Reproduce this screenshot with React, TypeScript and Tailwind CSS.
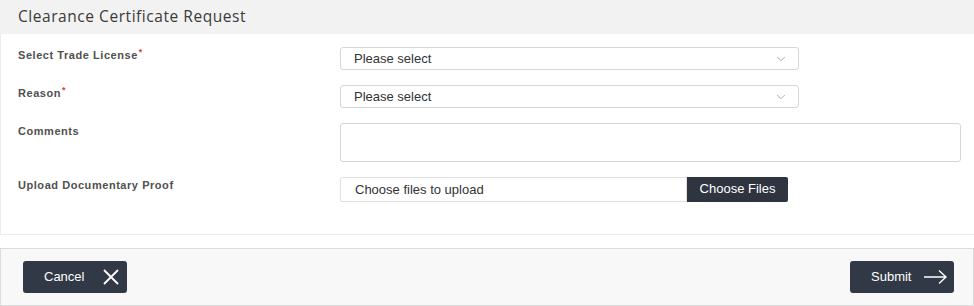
import { ChevronDown } from "lucide-react";

const arial = "font-['Liberation_Sans',Arial,sans-serif]";

function Label({ text, required }: { text: string; required?: boolean }) {
  return (
    <div className={`${arial} text-[11px] font-bold tracking-[0.55px] text-[#505050]`}>
      {text}
      {required && <sup className="ml-[1px] text-[9px] text-[#e53935]">*</sup>}
    </div>
  );
}

function Select() {
  return (
    <div className="flex h-[23px] w-[459px] items-center justify-between rounded-[3px] border border-[#d6d6d6] bg-white pl-[13px] pr-[10px]">
      <span className={`${arial} text-[13px] text-[#333]`}>Please select</span>
      <ChevronDown className="h-[14px] w-[14px] text-[#888]" strokeWidth={1.2} />
    </div>
  );
}

export default function App() {
  return (
    <div className="h-[306px] w-[974px] bg-white">
      {/* title bar */}
      <div className="flex h-[34px] items-center bg-[#f2f2f2] pl-[18px]">
        <h1 className="font-['Open_Sans',Lato,sans-serif] text-[15.5px] font-normal tracking-[0.55px] text-[#3a3a3a]">
          Clearance Certificate Request
        </h1>
      </div>

      {/* form */}
      <div className="h-[201px] border-b border-l border-[#ececec] pl-[17px]">
        <div className="flex h-[38px] pt-[13px]">
          <div className="w-[322px]">
            <Label text="Select Trade License" required />
          </div>
          <Select />
        </div>
        <div className="flex h-[38px] pt-[13px]">
          <div className="w-[322px]">
            <Label text="Reason" required />
          </div>
          <Select />
        </div>
        <div className="flex pt-[13px]">
          <div className="w-[322px]">
            <Label text="Comments" />
          </div>
          <div className="h-[39px] w-[621px] rounded-[3px] border border-[#d6d6d6] bg-white" />
        </div>
        <div className="flex pt-[15px]">
          <div className="w-[322px]">
            <Label text="Upload Documentary Proof" />
          </div>
          <div className="flex h-[25px]">
            <div
              className={`${arial} flex w-[347px] items-center rounded-l-[2px] border border-[#e0e0e0] pl-[14px] text-[13px] text-[#333]`}
            >
              Choose files to upload
            </div>
            <div
              className={`${arial} flex w-[101px] items-center justify-center rounded-r-[2px] bg-[#2e3540] pb-[2px] text-[13px] text-white`}
            >
              Choose Files
            </div>
          </div>
        </div>
      </div>

      {/* footer */}
      <div className="mt-[13px] flex h-[58px] items-center justify-between border border-[#dcdcdc] bg-[#f8f8f8] pl-[22px] pr-[19px]">
        <button
          type="button"
          className={`${arial} flex h-[32px] w-[104px] items-center justify-between rounded-[3px] bg-[#323946] pl-[21px] pr-[7px] text-[13px] text-white`}
        >
          Cancel
          <svg width="18" height="18" viewBox="0 0 18 18" fill="none" stroke="currentColor" strokeWidth="1.8">
            <path d="M2 2 L16 16 M16 2 L2 16" />
          </svg>
        </button>
        <button
          type="button"
          className={`${arial} flex h-[32px] w-[104px] items-center justify-between rounded-[3px] bg-[#323946] pl-[21px] pr-[6px] text-[13px] text-white`}
        >
          Submit
          <svg width="25" height="16" viewBox="0 0 25 16" fill="none" stroke="currentColor" strokeWidth="1.4">
            <path d="M1 8 H23 M16 1.5 L23 8 L16 14.5" />
          </svg>
        </button>
      </div>
    </div>
  );
}
